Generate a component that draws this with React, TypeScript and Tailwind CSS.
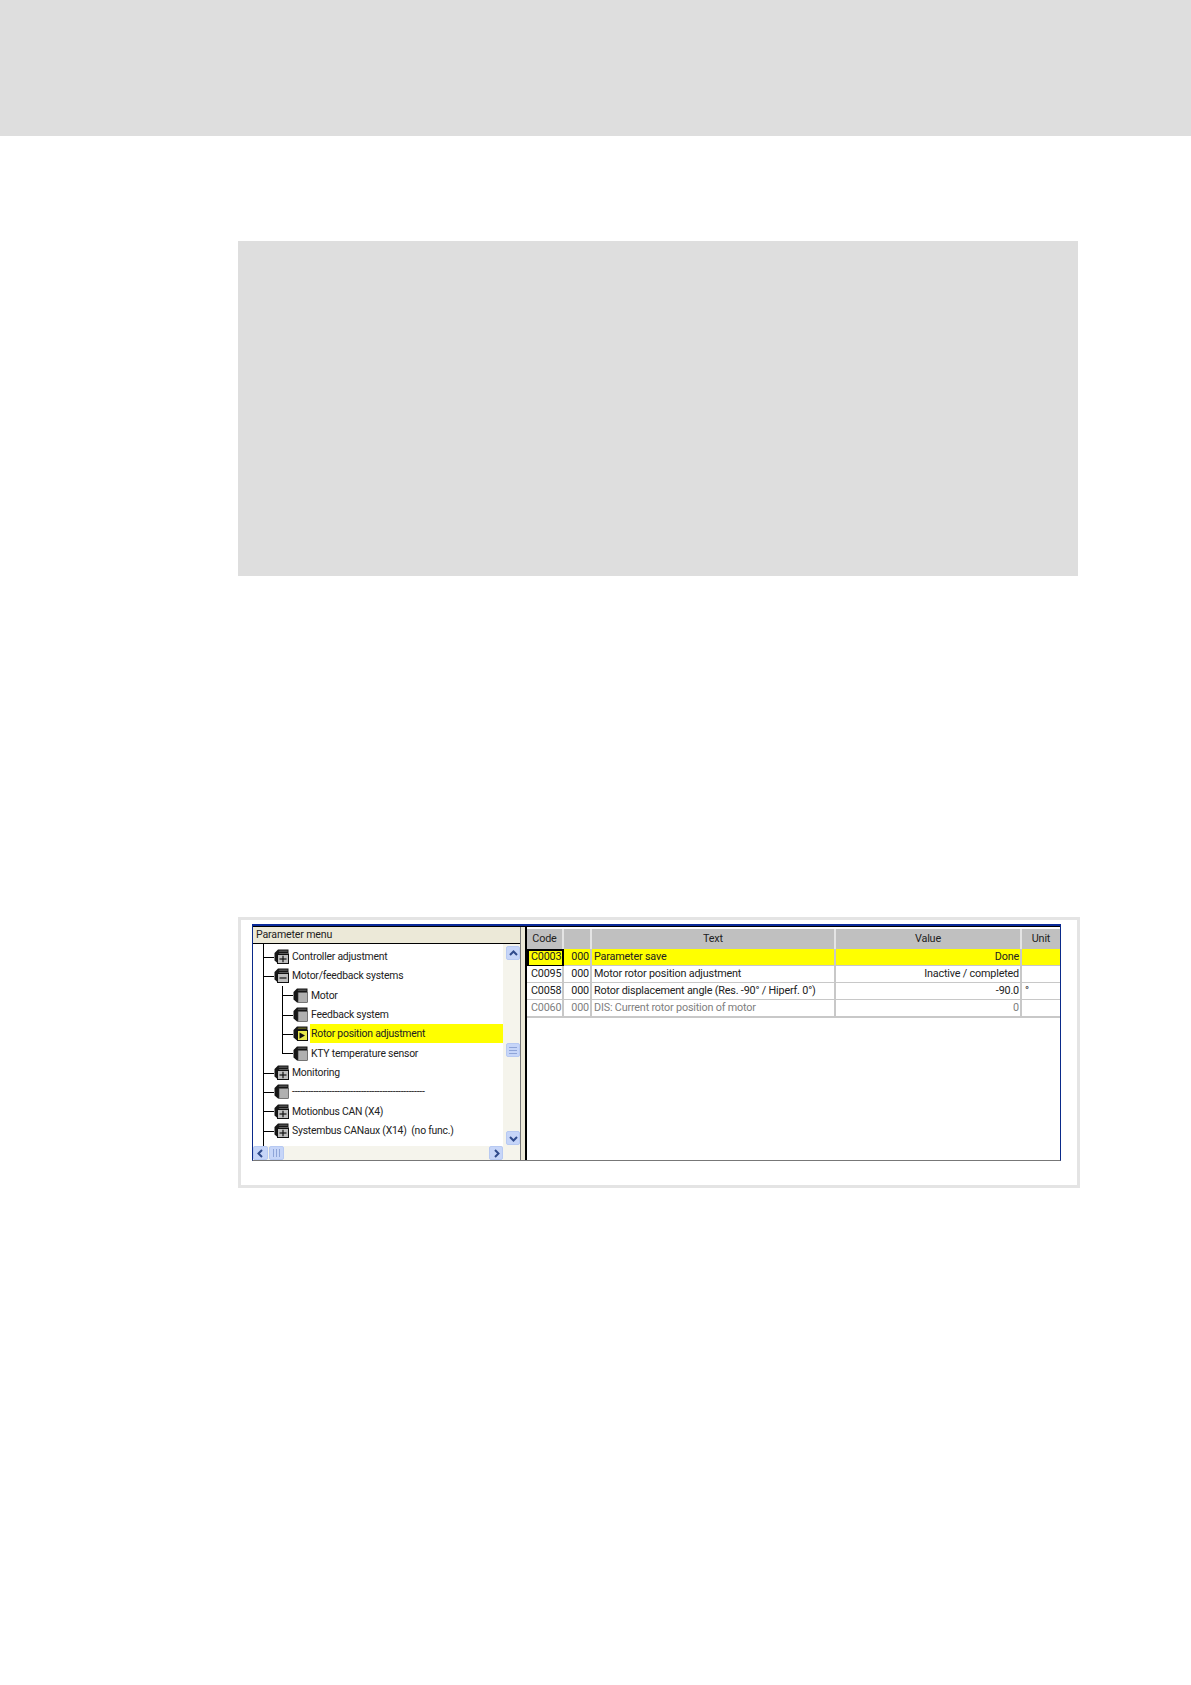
const FONT = "font-['Roboto','Liberation_Sans',Arial,sans-serif]";

function Cube({ kind }: { kind?: "plus" | "minus" | "play" }) {
  return (
    <svg width="15" height="15" viewBox="0 0 15 15" className="shrink-0">
      <path d="M0.5 4 L4 0.5 H14.5 V4.5 H5 V14.5 H4 L0.5 11.5 Z" fill="#161616" />
      <path d="M4.5 3 L5.5 1.5 H13.5 V3 Z" fill={kind === "play" ? "#5c5c20" : "#4a4a4a"} />
      <rect x="5" y="4.5" width="9.5" height="10" fill="#b0b0b0" stroke="#333333" strokeWidth="0.6" />
      {(kind === "plus" || kind === "minus") && (
        <g>
          <rect x="3.5" y="5.5" width="11" height="9" fill="#bdbdbd" stroke="#111111" strokeWidth="1" />
          <path d="M5.5 10 H12.5" stroke="#111111" strokeWidth="1.2" />
          {kind === "plus" && <path d="M9 6.8 V13.2" stroke="#111111" strokeWidth="1.2" />}
        </g>
      )}
      {kind === "play" && (
        <g>
          <rect x="4.5" y="4.5" width="10" height="10" fill="#e8e84a" stroke="#111111" strokeWidth="1" />
          <path d="M6.5 6.5 L12 9.5 L6.5 12.8 Z" fill="#111111" />
        </g>
      )}
    </svg>
  );
}

type Tree = { label: string; kind?: "plus" | "minus" | "play"; sub?: boolean; last?: boolean; hi?: boolean };
const tree: Tree[] = [
  { label: "Controller adjustment", kind: "plus" },
  { label: "Motor/feedback systems", kind: "minus" },
  { label: "Motor", sub: true },
  { label: "Feedback system", sub: true },
  { label: "Rotor position adjustment", sub: true, kind: "play", hi: true },
  { label: "KTY temperature sensor", sub: true, last: true },
  { label: "Monitoring", kind: "plus" },
  { label: "--------------------------------------------------" },
  { label: "Motionbus CAN (X4)", kind: "plus" },
  { label: "Systembus CANaux (X14)  (no func.)", kind: "plus" },
];

type Row = { code: string; sub: string; text: string; value: string; unit?: string; hi?: boolean; dim?: boolean };
const rows: Row[] = [
  { code: "C0003", sub: "000", text: "Parameter save", value: "Done", hi: true },
  { code: "C0095", sub: "000", text: "Motor rotor position adjustment", value: "Inactive / completed" },
  { code: "C0058", sub: "000", text: "Rotor displacement angle (Res. -90° / Hiperf. 0°)", value: "-90.0", unit: "°" },
  { code: "C0060", sub: "000", text: "DIS: Current rotor position of motor", value: "0", dim: true },
];

function Chevron({ d }: { d: string }) {
  return (
    <svg width="9" height="9" viewBox="0 0 9 9">
      <path d={d} fill="none" stroke="#2f4a8c" strokeWidth="2" />
    </svg>
  );
}

const btn = "flex items-center justify-center rounded-[2px] border border-[#b7c9f2] bg-[#c6d5f8] shrink-0";

function ScrollV() {
  return (
    <div className="w-[17px] shrink-0 flex flex-col bg-[#f5f4ec] pt-[2px] pb-[15px] pl-[3px]">
      <div className={`${btn} w-[14px] h-[14px]`}><Chevron d="M1 6 L4.5 2.5 L8 6" /></div>
      <div className="flex-1 pt-[83px]">
        <div className={`${btn} w-[14px] h-[14px]`}>
          <div className="w-[8px] h-[7px] border-y border-[#8ea4d8] flex items-center"><div className="w-full h-px bg-[#8ea4d8]" /></div>
        </div>
      </div>
      <div className={`${btn} w-[14px] h-[14px]`}><Chevron d="M1 3 L4.5 6.5 L8 3" /></div>
    </div>
  );
}

export default function App() {
  return (
    <div className={`w-[1191px] h-[1685px] bg-white overflow-hidden ${FONT}`}>
      <div className="h-[136px] bg-[#dedede]" />
      <div className="ml-[238px] mt-[105px] w-[840px] h-[335px] bg-[#dedede]" />
      <div className="ml-[238px] mt-[341px] w-[842px] h-[271px] border-[3px] border-[#e4e4e4] pl-[11px] pr-[16px] pt-[4px]">
        <div className="h-[237px] flex border-t-[2px] border-t-[#0a2a9a] border-x border-x-[#0a2a8a] border-b border-b-[#777777] bg-white">
          {/* Tree pane */}
          <div className="w-[267px] shrink-0 flex flex-col border-t border-black">
            <div className="h-[17px] bg-[#ece9d8] border-b border-black text-[10.6px] tracking-[-0.16px] leading-[16px] text-[#222] pl-[3px] shrink-0">
              Parameter menu
            </div>
            <div className="flex-1 flex min-h-0">
              <div className="flex-1 relative flex flex-col pt-[3px] min-w-0 overflow-hidden">
                <div className="absolute left-[10px] top-0 bottom-[14px] w-px bg-black" />
                {tree.map((t) => (
                  <div key={t.label} className={`relative h-[19.33px] flex items-center shrink-0 ${t.sub ? "pl-[40px]" : "pl-[21px]"}`}>
                    {t.sub && (
                      <div className={`absolute left-[29px] w-px bg-black ${t.last ? "top-0 h-1/2" : "top-0 bottom-0"}`} />
                    )}
                    <div className={`absolute h-px bg-black top-1/2 w-[11px] ${t.sub ? "left-[29px]" : "left-[10px]"}`} />
                    <Cube kind={t.kind} />
                    <span
                      className={`ml-[2px] pl-[1px] text-[10.4px] tracking-[-0.22px] leading-[19px] whitespace-pre text-[#222] ${
                        t.hi ? "bg-[#ffff00] w-[196px] h-[19px]" : ""
                      }`}
                    >
                      {t.label}
                    </span>
                  </div>
                ))}
                <div className="absolute left-0 right-0 bottom-0 h-[14px] bg-[#f5f4ec] flex items-center justify-between">
                  <div className="flex gap-px">
                    <div className={`${btn} w-[15px] h-[14px]`}><Chevron d="M6 1 L2.5 4.5 L6 8" /></div>
                    <div className={`${btn} w-[15px] h-[14px]`}>
                      <div className="w-[7px] h-[8px] border-x border-[#8ea4d8] flex justify-center"><div className="h-full w-px bg-[#8ea4d8]" /></div>
                    </div>
                  </div>
                  <div className={`${btn} w-[14px] h-[14px]`}><Chevron d="M3 1 L6.5 4.5 L3 8" /></div>
                </div>
              </div>
              <ScrollV />
            </div>
          </div>
          {/* Splitter */}
          <div className="w-[7px] shrink-0 flex border-t border-black">
            <div className="w-px bg-[#777777]" />
            <div className="w-[4px] bg-[#ece9d8]" />
            <div className="w-[2px] bg-black" />
          </div>
          {/* Table */}
          <div className="flex-1 min-w-0 border-t border-black text-[10.8px] tracking-[-0.18px] text-[#222]">
            <div className="grid grid-cols-[37px_28px_244px_186px_38px] h-[20px] mt-[2px] text-center leading-[20px]">
              {["Code", "", "Text", "Value", "Unit"].map((h, i) => (
                <div key={i} className={`bg-[#c0c0c0] border-b border-b-[#9a9a9a] ${i < 4 ? "border-r-2 border-r-[#e4e4e4]" : ""}`}>{h}</div>
              ))}
            </div>
            {rows.map((r) => {
              const rowBg = r.hi ? "bg-[#ffff00]" : "bg-white";
              const col = r.dim ? "text-[#808080]" : "text-[#222]";
              const cell = `${rowBg} ${col} border-b-2 border-b-[#c8c8c8] whitespace-pre`;
              const sep = "border-r-2 border-r-[#c8c8c8]";
              return (
                <div key={r.code} className="grid grid-cols-[37px_28px_244px_186px_38px] h-[17px] leading-[16px]">
                  <div className={`${cell} ${sep} pl-[4px] ${r.hi ? "outline-2 -outline-offset-2 outline-black" : ""}`}>{r.code}</div>
                  <div className={`${cell} ${sep} text-right pr-[1px]`}>{r.sub}</div>
                  <div className={`${cell} ${sep} pl-[2px]`}>{r.text}</div>
                  <div className={`${cell} ${sep} text-right pr-[1px]`}>{r.value}</div>
                  <div className={`${cell} pl-[3px]`}>{r.unit ?? ""}</div>
                </div>
              );
            })}
          </div>
        </div>
      </div>
    </div>
  );
}
